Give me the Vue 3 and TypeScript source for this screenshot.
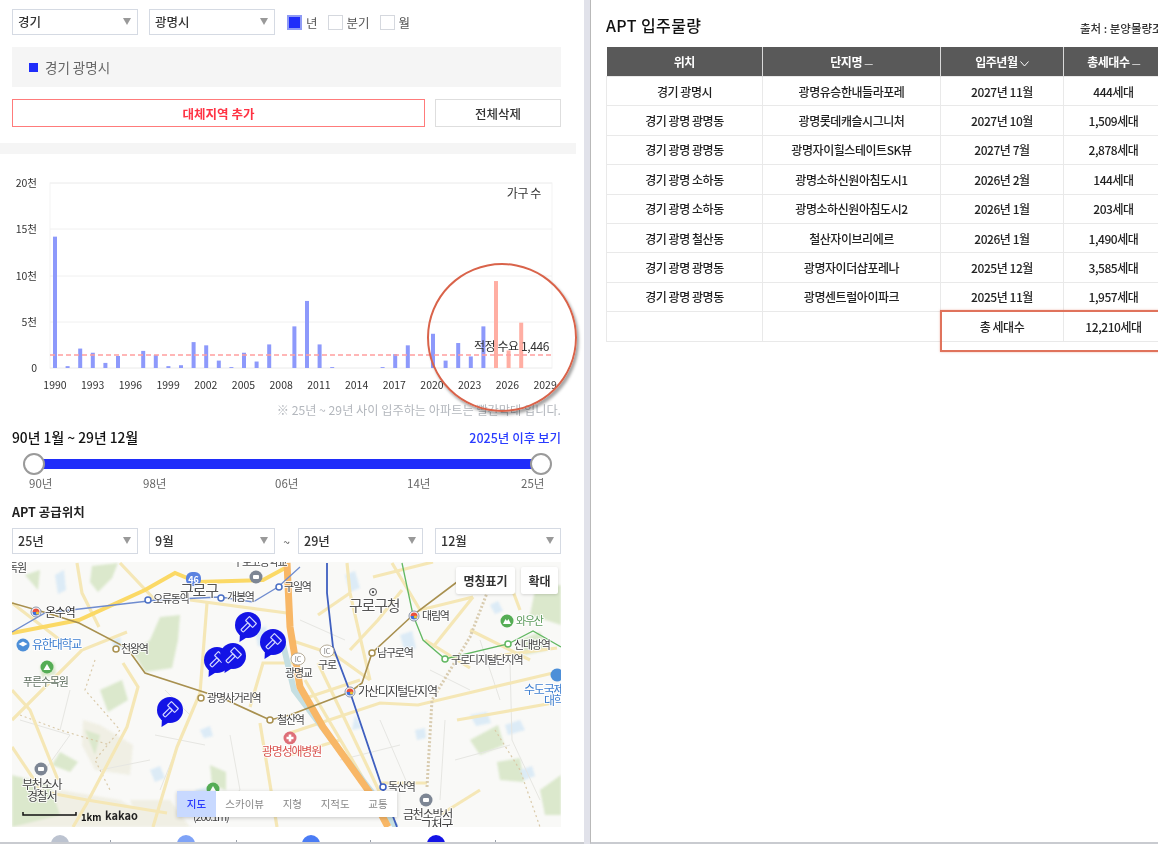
<script setup lang="ts">
import { computed } from 'vue'

interface Supply {
  area: string
  name: string
  date: string
  count: string
}

interface MapLabel {
  x: number
  y: number
  t: string
  size?: number
  color?: string
}

const years = [
  14.2, 0.2, 2.1, 1.65, 0.55, 1.3, 0, 1.85, 1.4, 0.2, 0.3, 2.8, 2.45, 0.8, 0.1, 1.65, 0.7, 2.55, 0, 4.5,
  7.25, 2.55, 0.1, 0, 0, 0, 0.1, 1.5, 2.45, 0, 3.7, 0.8, 2.7, 1.25, 4.5, 9.4, 1.9, 4.9,
]

const bars = computed(() =>
  years.map((v, i) => ({
    x: 53 + i * 12.6,
    y: 368 - v * 9.25,
    h: v * 9.25,
    future: i >= 35,
  })),
)

const yTicks = [
  { label: '20천', y: 183 },
  { label: '15천', y: 229 },
  { label: '10천', y: 276 },
  { label: '5천', y: 322 },
  { label: '0', y: 368 },
]

const xTicks = [1990, 1993, 1996, 1999, 2002, 2005, 2008, 2011, 2014, 2017, 2020, 2023, 2026, 2029]

const sliderLabels = [
  { t: '90년', w: 114 },
  { t: '98년', w: 132 },
  { t: '06년', w: 132 },
  { t: '14년', w: 114 },
  { t: '25년', w: 0 },
]

const rows: Supply[] = [
  { area: '경기 광명시', name: '광명유승한내들라포레', date: '2027년 11월', count: '444세대' },
  { area: '경기 광명 광명동', name: '광명롯데캐슬시그니처', date: '2027년 10월', count: '1,509세대' },
  { area: '경기 광명 광명동', name: '광명자이힐스테이트SK뷰', date: '2027년 7월', count: '2,878세대' },
  { area: '경기 광명 소하동', name: '광명소하신원아침도시1', date: '2026년 2월', count: '144세대' },
  { area: '경기 광명 소하동', name: '광명소하신원아침도시2', date: '2026년 1월', count: '203세대' },
  { area: '경기 광명 철산동', name: '철산자이브리에르', date: '2026년 1월', count: '1,490세대' },
  { area: '경기 광명 광명동', name: '광명자이더샵포레나', date: '2025년 12월', count: '3,585세대' },
  { area: '경기 광명 광명동', name: '광명센트럴아이파크', date: '2025년 11월', count: '1,957세대' },
]

const beige = [
  '83,720 100,725 133,745 130,775 95,770 82,745',
  '12,800 60,790 120,800 170,827 12,827',
  '130,800 170,800 190,827 140,827',
]

const parks = [
  '160,617 180,615 178,640 172,668 145,672 133,652 150,640',
  '92,566 118,563 112,578 98,592 90,582',
  '40,666 54,662 56,674 42,678',
  '100,690 122,680 128,700 108,712',
  '60,752 78,762 70,772 52,765',
  '210,765 226,772 226,790 212,785',
  '470,740 498,725 504,745 480,755',
  '497,762 520,758 524,782 500,780',
  '540,790 561,775 561,815 545,815',
  '535,590 561,585 561,625 530,615',
  '12,775 50,785 60,815 12,827',
  '25,575 40,570 38,590',
  '520,640 540,632 548,650 525,655',
  '85,730 100,735 95,755',
]

const water = [
  '55,575 64,570 66,590 58,594',
  '112,640 120,637 122,648 114,650',
  '150,770 160,766 165,778 155,782',
  '195,790 212,786 216,796 200,798',
  '345,575 355,571 360,588 350,592',
  '400,635 412,631 416,648 405,652',
  '470,715 487,712 491,723 476,726',
  '355,715 362,728 352,730',
  '490,605 498,601 503,611 495,614',
  '520,770 532,766 535,776 524,780',
  '255,630 266,626 268,646 258,646',
  '200,730 210,726 213,736 204,738',
  '415,730 425,728 426,738 417,740',
  '505,725 520,720 525,730 508,735',
]

const roads = [
  '77,563 82,593 99,627',
  '12,720 82,650 127,632',
  '123,663 138,687 127,727 87,803 73,827',
  '207,603 200,693 177,747 153,827',
  '50,793 87,800 167,813',
  '12,747 43,793',
  '190,600 287,613',
  '250,707 263,663 293,663',
  '260,723 277,827',
  '290,733 380,703 418,705 553,673',
  '347,563 350,593 370,680',
  '318,663 380,793',
  '373,577 433,562',
  '433,647 473,597',
  '457,720 553,703',
  '392,563 420,610 473,597',
  '487,657 557,648',
  '380,783 427,783',
  '425,640 470,668',
  '290,640 335,655 370,680',
  '305,680 370,790',
  '120,563 155,600',
  '12,603 60,640',
  '440,815 480,790',
  '300,700 360,680',
  '350,650 378,620 402,590',
  '318,615 350,593',
  '470,630 530,660',
  '12,690 30,710 58,780',
  '505,570 520,610',
  '290,755 340,740',
]

const alleys = [
  '165,690 190,715 160,790',
  '155,735 205,745',
  '20,720 70,735 45,770',
  '230,735 240,790 210,815',
  '445,720 440,800',
  '455,760 510,745',
  '510,663 512,740 540,800',
  '480,640 500,700',
  '380,720 410,790',
  '340,760 400,745',
  '300,620 345,640',
  '430,670 470,690',
  '70,690 60,730',
  '100,770 150,760',
]

const boundary = [
  '95,660 85,690 120,730 95,760 110,790',
  '20,715 60,730 110,745',
  '495,730 520,770 540,827',
]

const mapLabels: MapLabel[] = [
  { x: 8, y: 572, t: '독원' },
  { x: 233, y: 566, t: '구로고등학교' },
  { x: 284, y: 591, t: '구일역' },
  { x: 153, y: 603, t: '오류동역' },
  { x: 227, y: 601, t: '개봉역' },
  { x: 180, y: 596, t: '구로구', size: 15, color: '#555' },
  { x: 45, y: 617, t: '온수역', size: 12, color: '#333' },
  { x: 32, y: 649, t: '유한대학교', size: 12, color: '#3f7fd0' },
  { x: 121, y: 653, t: '천왕역' },
  { x: 23, y: 686, t: '푸른수목원', color: '#5f6f5f' },
  { x: 207, y: 702, t: '광명사거리역' },
  { x: 277, y: 724, t: '철산역' },
  { x: 262, y: 756, t: '광명성애병원', size: 12, color: '#d9534f' },
  { x: 22, y: 789, t: '부천소사', size: 12 },
  { x: 27, y: 801, t: '경찰서', size: 12 },
  { x: 349, y: 611, t: '구로구청', size: 15, color: '#555' },
  { x: 422, y: 620, t: '대림역' },
  { x: 377, y: 657, t: '남구로역' },
  { x: 451, y: 664, t: '구로디지털단지역' },
  { x: 514, y: 649, t: '신대방역' },
  { x: 516, y: 625, t: '와우산', color: '#5a9a5a' },
  { x: 358, y: 696, t: '가산디지털단지역', size: 12 },
  { x: 318, y: 669, t: '구로' },
  { x: 285, y: 677, t: '광명교' },
  { x: 524, y: 694, t: '수도국제', size: 12, color: '#3f7fd0' },
  { x: 544, y: 705, t: '대학', size: 12, color: '#3f7fd0' },
  { x: 388, y: 791, t: '독산역' },
  { x: 403, y: 819, t: '금천소방서', size: 12 },
  { x: 420, y: 829, t: '그처구', size: 13 },
  { x: 193, y: 821, t: '(200.1m)' },
]

const stations = [
  { x: 148, y: 600, c: '#4a6fc4' },
  { x: 221, y: 598, c: '#4a6fc4' },
  { x: 279, y: 587, c: '#4a6fc4' },
  { x: 116, y: 649, c: '#a8904f' },
  { x: 201, y: 698, c: '#a8904f' },
  { x: 270, y: 720, c: '#a8904f' },
  { x: 372, y: 653, c: '#a8904f' },
  { x: 445, y: 659, c: '#62b862' },
  { x: 508, y: 644, c: '#62b862' },
  { x: 383, y: 787, c: '#3b5fc4' },
]

const transfers = [
  { x: 36, y: 612 },
  { x: 350, y: 692 },
  { x: 414, y: 616 },
]

const markers = [
  { x: 170, y: 710 },
  { x: 217, y: 660 },
  { x: 233, y: 656 },
  { x: 248, y: 625 },
  { x: 273, y: 642 },
]

const gray = [
  { x: 41, y: 769 },
  { x: 256, y: 577 },
  { x: 426, y: 800 },
]

const legendDots = [
  { x: 60, c: '#bcc3d0' },
  { x: 186, c: '#7fa3f7' },
  { x: 311, c: '#4a7cf5' },
  { x: 436, c: '#1414e6' },
]

const legendTicks = [110, 236, 370, 495]
</script>

<template>
  <div class="page">
    <section class="left">
      <div class="pad">
        <div class="row">
          <div class="select w126">경기<i /></div>
          <div class="select w126">광명시<i /></div>
          <label class="check first"><b class="on" />년</label>
          <label class="check"><b />분기</label>
          <label class="check"><b />월</label>
        </div>
        <div class="picked"><em />경기 광명시</div>
        <div class="actions">
          <button class="btn red">대체지역 추가</button>
          <button class="btn">전체삭제</button>
        </div>
      </div>
      <div class="divider" />

      <svg class="chart" viewBox="0 154 585 246" width="585" height="246">
        <rect x="50" y="183" width="502" height="185" fill="none" stroke="#f3f3f3" />
        <template v-for="t in yTicks" :key="t.label">
          <line x1="50" x2="552" :y1="t.y" :y2="t.y" stroke="#f0f0f0" />
          <text x="37" :y="t.y + 4" text-anchor="end" class="tick">{{ t.label }}</text>
        </template>
        <rect
          v-for="(b, i) in bars"
          :key="i"
          :x="b.x"
          :y="b.y"
          width="4"
          :height="b.h"
          :fill="b.future ? '#ffaea3' : '#8d99fb'"
        />
        <line x1="50" x2="552" y1="355" y2="355" stroke="#ff9f9f" stroke-width="1.3" stroke-dasharray="5 3" />
        <text v-for="(y, i) in xTicks" :key="y" :x="55 + i * 37.7" y="389" text-anchor="middle" class="tick">{{ y }}</text>
        <text x="541" y="198" text-anchor="end" class="note">가구 수</text>
        <text x="549" y="351" text-anchor="end" class="note">적정 수요 1,446</text>
      </svg>
      <p class="foot">※ 25년 ~ 29년 사이 입주하는 아파트는 빨간막대 입니다.</p>

      <div class="pad">
        <div class="range-head">
          <strong>90년 1월 ~ 29년 12월</strong>
          <a>2025년 이후 보기</a>
        </div>
        <div class="slider"><span class="knob l" /><span class="knob r" /></div>
        <div class="ruler">
          <span v-for="s in sliderLabels" :key="s.t" :style="{ width: s.w + 'px' }">{{ s.t }}</span>
        </div>
        <h4>APT 공급위치</h4>
        <div class="row period">
          <div class="select w126">25년<i /></div>
          <div class="select w126">9월<i /></div>
          <span class="tilde">~</span>
          <div class="select w125">29년<i /></div>
          <div class="select w126 last">12월<i /></div>
        </div>
      </div>

      <div class="map">
        <svg viewBox="12 562 549 265" width="549" height="265">
          <rect x="12" y="562" width="549" height="265" fill="#f9f9f7" />
          <g class="soft">
            <polygon v-for="p in beige" :key="p" :points="p" fill="#f0efe4" />
            <polygon v-for="p in parks" :key="p" :points="p" fill="#dbe8cc" />
            <polygon v-for="p in water" :key="p" :points="p" fill="#dcebf6" />
          </g>
          <polyline v-for="a in alleys" :key="a" :points="a" class="alley" />
          <polyline v-for="b in boundary" :key="b" :points="b" class="boundary" />
          <polyline v-for="r in roads" :key="r" :points="r" class="road" />
          <polyline points="427,787 432,700 470,637 487,593" class="rail" />
          <polyline points="282,640 294,690 328,735 374,795 396,827" class="river" />
          <polyline points="12,633 79,620 145,590 175,573 197,582 263,580 287,567" class="major" />
          <polyline points="287,563 290,627 300,687 323,727 370,793 388,827" class="express" />
          <polyline
            points="12,603 47,613 79,623 127,648 145,673 222,698 270,720 290,715 350,692 362,683 372,653 413,615 457,582"
            class="metro brown"
          />
          <polyline points="12,632 45,613 157,600 220,597 253,602 278,587 300,567" class="metro blue" />
          <polyline points="327,563 327,593 333,647 350,692 382,787 397,827" class="metro navy" />
          <polyline points="402,563 413,615 423,640 445,659 508,644 533,631 561,647" class="metro green" />

          <circle v-for="s in stations" :key="s.x" :cx="s.x" :cy="s.y" r="3" fill="#fff" :stroke="s.c" stroke-width="1.5" />
          <g v-for="t in transfers" :key="t.x">
            <circle :cx="t.x" :cy="t.y" r="5" fill="#fff" stroke="#8a93a8" stroke-width="1" />
            <path :d="`M${t.x - 3.5} ${t.y}a3.5 3.5 0 0 1 7 0z`" fill="#e8503f" />
            <path :d="`M${t.x - 3.5} ${t.y}a3.5 3.5 0 0 0 7 0z`" fill="#3f6fd8" />
            <circle :cx="t.x + 1.5" :cy="t.y + 1" r="1.6" fill="#f2c230" />
          </g>

          <g v-for="g in gray" :key="g.x">
            <circle :cx="g.x" :cy="g.y" r="6.5" fill="#7d8694" />
            <rect :x="g.x - 3" :y="g.y - 2" width="6" height="4" rx="1" fill="#fff" />
          </g>
          <circle cx="47" cy="667" r="6.5" fill="#55ad55" />
          <path d="M43.5 670l3.5-6 3.5 6z" fill="#fff" />
          <circle cx="213" cy="789" r="6.5" fill="#55ad55" />
          <path d="M209.5 792l3.5-6 3.5 6z" fill="#fff" />
          <circle cx="507" cy="621" r="6.5" fill="#55ad55" />
          <path d="M503 624l2.5-5 1.5 2 1.5-2 2.5 5z" fill="#fff" />
          <circle cx="23" cy="645" r="6.5" fill="#4d8fd8" />
          <path d="M18.5 644l4.5-2.5 4.5 2.5-4.5 2.5z" fill="#fff" />
          <circle cx="557" cy="675" r="6.5" fill="#4d8fd8" />
          <circle cx="290" cy="738" r="6.5" fill="#de6f78" />
          <path d="M288.7 734.5h2.6v2.2h2.2v2.6h-2.2v2.2h-2.6v-2.2h-2.2v-2.6h2.2z" fill="#fff" />
          <g class="ic">
            <ellipse cx="327" cy="651" rx="7" ry="6" />
            <ellipse cx="298" cy="659" rx="7" ry="6" />
          </g>
          <text x="327" y="654" text-anchor="middle" class="ic-text">IC</text>
          <text x="298" y="662" text-anchor="middle" class="ic-text">IC</text>
          <circle cx="373" cy="592" r="3.5" fill="#fff" stroke="#555" />
          <circle cx="373" cy="592" r="1.2" fill="#555" />
          <rect x="186" y="572" width="15" height="14" rx="6" fill="#5b82e0" />
          <text x="193.5" y="583" text-anchor="middle" class="shield">46</text>

          <text
            v-for="l in mapLabels"
            :key="l.t"
            :x="l.x"
            :y="l.y"
            class="map-label"
            :font-size="l.size || 11"
            :fill="l.color || '#444'"
          >{{ l.t }}</text>

          <g v-for="m in markers" :key="m.x" :transform="`translate(${m.x} ${m.y})`">
            <path d="M-8 8L-8.5 17L1 11z" fill="#1414e6" />
            <circle r="13" fill="#1414e6" />
            <g fill="none" stroke="#d5d9ff" stroke-width="1.2" transform="rotate(45)">
              <rect x="-5" y="-7" width="10" height="5.5" rx="0.5" />
              <rect x="-1.7" y="-1.5" width="3.4" height="10" rx="0.8" />
            </g>
          </g>

          <path d="M23 812v3h53v-3" fill="none" stroke="#111" stroke-width="1.5" />
          <text x="81" y="821" class="km">1km</text>
          <text x="105" y="820" class="kakao">kakao</text>
        </svg>
        <div class="map-btn names">명칭표기</div>
        <div class="map-btn zoom">확대</div>
        <div class="types">
          <span class="active">지도</span>
          <span>스카이뷰</span>
          <span>지형</span>
          <span>지적도</span>
          <span>교통</span>
        </div>
      </div>

      <div class="legend">
        <span v-for="d in legendDots" :key="d.x" class="dot" :style="{ left: d.x - 9 + 'px', background: d.c }" />
        <span v-for="t in legendTicks" :key="t" class="mark" :style="{ left: t + 'px' }" />
      </div>

      <div class="callout" />
    </section>

    <section class="right">
      <div class="table-head">
        <h3>APT 입주물량</h3>
        <span>출처 : 분양물량조사</span>
      </div>
      <div class="table-wrap">
        <table>
          <colgroup>
            <col style="width: 156px" />
            <col style="width: 178px" />
            <col style="width: 123px" />
            <col style="width: 100px" />
          </colgroup>
          <thead>
            <tr>
              <th>위치</th>
              <th>단지명 <small>—</small></th>
              <th>입주년월 <svg width="9" height="6" viewBox="0 0 9 6"><path d="M.5.5l4 4.5 4-4.5" fill="none" stroke="#fff" /></svg></th>
              <th>총세대수 <small>—</small></th>
            </tr>
          </thead>
          <tbody>
            <tr v-for="(r, i) in rows" :key="i">
              <td>{{ r.area }}</td>
              <td>{{ r.name }}</td>
              <td>{{ r.date }}</td>
              <td>{{ r.count }}</td>
            </tr>
            <tr>
              <td />
              <td />
              <td>총 세대수</td>
              <td>12,210세대</td>
            </tr>
          </tbody>
        </table>
        <div class="total-box" />
      </div>
    </section>
  </div>
</template>

<style>
html,
body {
  margin: 0;
  background: #fff;
  overflow: hidden;
}
</style>

<style scoped>
.page {
  position: relative;
  width: 1158px;
  height: 844px;
  display: flex;
  overflow: hidden;
  background: #fff;
  color: #222;
  font-family: 'Noto Sans CJK KR', 'Noto Sans', sans-serif;
  font-size: 12px;
  filter: blur(0.35px);
}

.left {
  position: relative;
  flex: 0 0 584px;
  height: 842px;
  overflow: hidden;
  border-bottom: 2px solid #c9cbd0;
}

.right {
  flex: 1;
  height: 842px;
  min-width: 0;
  margin-left: 6px;
  border-left: 1px solid #b9b9b9;
  border-bottom: 2px solid #c9cbd0;
  overflow: hidden;
  position: relative;
}

.page::before {
  content: '';
  position: absolute;
  left: 584px;
  top: 0;
  width: 6px;
  height: 844px;
  background: #e1e2ea;
}

.pad {
  width: 549px;
  padding: 0 12px;
}

.row {
  display: flex;
  align-items: center;
  padding-top: 9px;
}

.select {
  position: relative;
  box-sizing: border-box;
  height: 26px;
  line-height: 23px;
  padding-left: 5px;
  border: 1.5px solid #d5dae3;
  background: #fff;
  font-size: 12.5px;
  font-weight: 500;
  color: #333;
  margin-right: 11px;
}

.select i {
  position: absolute;
  right: 6px;
  top: 8px;
  border-left: 4px solid transparent;
  border-right: 4px solid transparent;
  border-top: 7px solid #999;
}

.w126 {
  width: 126px;
}

.w125 {
  width: 125px;
  margin-right: 12px;
}

.last {
  margin-right: 0;
}

.check {
  display: flex;
  align-items: center;
  font-size: 12.5px;
  color: #555;
  margin-right: 10px;
  height: 26px;
}

.check.first {
  margin-left: 1px;
}

.check b {
  box-sizing: border-box;
  width: 15px;
  height: 15px;
  border: 1px solid #d5d8de;
  margin-right: 4px;
  background: #fff;
}

.check b.on {
  background: #1f2dfa;
  border: 2px solid #8f9bf5;
}

.picked {
  display: flex;
  align-items: center;
  height: 40px;
  margin-top: 12px;
  padding-left: 17px;
  background: #f5f5f5;
  font-size: 13.5px;
  color: #666;
}

.picked em {
  width: 9px;
  height: 9px;
  margin-right: 7px;
  background: #1f2dfa;
}

.actions {
  display: flex;
  gap: 10px;
  margin-top: 12px;
}

.btn {
  box-sizing: border-box;
  height: 28px;
  width: 126px;
  padding: 0;
  border: 1.5px solid #dedede;
  background: #fff;
  font: 500 12.5px 'Noto Sans CJK KR', sans-serif;
  color: #333;
}

.btn.red {
  width: 413px;
  border-color: #ff7b7b;
  color: #ff3344;
  font-weight: 700;
}

.divider {
  width: 576px;
  height: 11px;
  margin-top: 16px;
  background: #f5f5f5;
}

.chart {
  display: block;
}

.tick {
  font-size: 10.5px;
  fill: #333;
}

.note {
  font-size: 12px;
  letter-spacing: -0.4px;
  fill: #333;
}

.foot {
  width: 561px;
  height: 20px;
  margin: 0;
  line-height: 20px;
  text-align: right;
  font-size: 12.2px;
  color: #b3b7bd;
}

.range-head {
  display: flex;
  justify-content: space-between;
  align-items: center;
  height: 20px;
  margin-top: 7px;
}

.range-head strong {
  font-size: 13.8px;
  font-weight: 500;
  color: #111;
}

.range-head a {
  font-size: 12.5px;
  font-weight: 500;
  color: #2a3cff;
}

.slider {
  position: relative;
  height: 10px;
  margin: 12px 20px 0 22px;
  background: #1f2dfa;
}

.knob {
  position: absolute;
  top: -6px;
  box-sizing: border-box;
  width: 22px;
  height: 22px;
  border: 2px solid #9a9a9a;
  border-radius: 50%;
  background: #fff;
}

.knob.l {
  left: -11px;
}

.knob.r {
  right: -11px;
}

.ruler {
  display: flex;
  height: 18px;
  margin-top: 5px;
  padding-left: 17px;
  font-size: 11.5px;
  line-height: 18px;
  color: #666;
}

.ruler span {
  flex: none;
  white-space: nowrap;
}

h4 {
  height: 20px;
  margin: 10px 0 0;
  font-size: 12.5px;
  font-weight: 700;
  line-height: 20px;
  color: #222;
}

.period {
  padding-top: 6px;
}

.tilde {
  width: 23px;
  margin-left: -11px;
  margin-right: 0;
  text-align: center;
  color: #555;
}

.map {
  position: relative;
  width: 549px;
  height: 265px;
  margin: 8px 0 0 12px;
  overflow: hidden;
}

.map svg {
  display: block;
}

.soft {
  filter: blur(1.2px);
}

.road {
  fill: none;
  stroke: #f5e7b6;
  stroke-width: 3.2;
}

.alley {
  fill: none;
  stroke: #e6e6e2;
  stroke-width: 1;
}

.boundary {
  fill: none;
  stroke: #d9c9a8;
  stroke-width: 1.2;
  stroke-dasharray: 2 3;
}

.rail {
  fill: none;
  stroke: #d9ccb0;
  stroke-width: 3;
  stroke-dasharray: 2 2;
}

.river {
  fill: none;
  stroke: #c5dfe2;
  stroke-width: 6;
}

.major {
  fill: none;
  stroke: #fbd966;
  stroke-width: 4;
}

.express {
  fill: none;
  stroke: #f8b766;
  stroke-width: 7;
}

.metro {
  fill: none;
  stroke-width: 1.3;
}

.brown {
  stroke: #a8904f;
  stroke-width: 1.6;
}

.blue {
  stroke: #6f8ccf;
}

.navy {
  stroke: #3f5fbf;
  stroke-width: 1.8;
}

.green {
  stroke: #62b862;
}

.map-label {
  font-family: 'Noto Sans CJK KR', sans-serif;
  letter-spacing: -1.2px;
  paint-order: stroke;
  stroke: rgba(255, 255, 255, 0.85);
  stroke-width: 2px;
  stroke-linejoin: round;
}

.ic ellipse {
  fill: #fff;
  stroke: #b5ab98;
}

.ic-text {
  font-size: 7px;
  fill: #777;
}

.shield {
  font-size: 9px;
  font-weight: 700;
  fill: #fff;
}

.km {
  font-size: 9.5px;
  font-weight: 700;
  fill: #111;
}

.kakao {
  font-size: 11px;
  font-weight: 700;
  fill: #222;
}

.map-btn {
  position: absolute;
  top: 5px;
  height: 27px;
  line-height: 27px;
  text-align: center;
  background: #fff;
  border-radius: 2px;
  font-size: 12px;
  font-weight: 700;
  color: #333;
  box-shadow: 0 1px 3px rgba(0, 0, 0, 0.15);
}

.names {
  left: 444px;
  width: 59px;
}

.zoom {
  left: 509px;
  width: 37px;
}

.types {
  position: absolute;
  left: 165px;
  top: 229px;
  display: flex;
  width: 220px;
  height: 26px;
  background: #fff;
  font-size: 10.5px;
  line-height: 26px;
  color: #888;
  box-shadow: 0 1px 4px rgba(0, 0, 0, 0.2);
}

.types span {
  flex: 1 1 auto;
  text-align: center;
}

.types .active {
  flex: 0 0 39px;
  background: #c8d9ff;
  color: #2a3cff;
  font-weight: 500;
}

.legend {
  position: relative;
  height: 20px;
}

.dot {
  position: absolute;
  top: 8px;
  width: 18px;
  height: 18px;
  border-radius: 50%;
}

.mark {
  position: absolute;
  top: 13px;
  width: 1px;
  height: 3px;
  background: #9aa0aa;
}

.callout {
  position: absolute;
  left: 427px;
  top: 263px;
  box-sizing: border-box;
  width: 150px;
  height: 149px;
  border: 2px solid #d9634a;
  border-radius: 50%;
  box-shadow: 2px 3px 3px rgba(0, 0, 0, 0.35);
}

.table-head {
  display: flex;
  justify-content: space-between;
  align-items: center;
  width: 640px;
  height: 47px;
  margin-left: 15px;
  box-sizing: border-box;
  padding-top: 2px;
}

.table-head h3 {
  margin: 0;
  font-size: 16px;
  font-weight: 500;
  letter-spacing: 0.4px;
  color: #111;
}

.table-head span {
  position: absolute;
  left: 489px;
  top: 20px;
  white-space: nowrap;
  font-size: 11.5px;
  font-weight: 500;
  color: #333;
}

.table-wrap {
  position: relative;
  width: 567px;
  margin-left: 15px;
}

table {
  width: 557px;
  border-collapse: collapse;
  table-layout: fixed;
  font-size: 12px;
  letter-spacing: -0.45px;
}

th {
  height: 29px;
  padding: 0;
  background: #595959;
  border-left: 1px solid #d9d9d9;
  color: #fff;
  font-weight: 700;
  font-size: 12px;
}

th:first-child {
  border-left: 0;
}

th small {
  font-size: 10px;
  font-weight: 400;
}

td {
  height: 28.4px;
  padding: 0;
  text-align: center;
  font-weight: 500;
  color: #222;
  border: 1px solid #e9e9e9;
}

.total-box {
  position: absolute;
  left: 334px;
  top: 263px;
  width: 240px;
  height: 38px;
  border: 2px solid #e0735c;
  box-shadow: 0 0 2px rgba(224, 115, 92, 0.5);
}
</style>
